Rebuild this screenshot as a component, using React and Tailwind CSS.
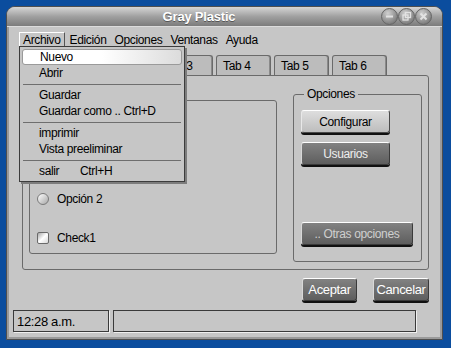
import React from "react";

const raisedLight =
  "rounded-[3px] border border-[#4a4a4a] border-t-white border-l-[#e8e8e8] shadow-[0_2px_0_#111] bg-gradient-to-b from-[#dedede] to-[#bdbdbd] text-black";
const raisedDark =
  "rounded-[3px] border border-[#3a3a3a] border-t-white border-l-[#d8d8d8] shadow-[0_2px_0_#111] bg-gradient-to-b from-[#828282] to-[#5e5e5e]";

function WinButton({ children }) {
  return (
    <svg width="17" height="17" viewBox="0 0 17 17">
      <defs>
        <radialGradient id="wb" cx="40%" cy="30%" r="70%">
          <stop offset="0%" stopColor="#cfcfcf" />
          <stop offset="100%" stopColor="#7a7a7a" />
        </radialGradient>
      </defs>
      <circle cx="8.5" cy="8.5" r="8" fill="url(#wb)" stroke="#666" />
      {children}
    </svg>
  );
}

function MenuItem({ children, active }) {
  return (
    <div
      className={`h-[16px] mx-[2px] pl-[17px] flex items-center leading-none ${
        active
          ? "rounded-[3px] border border-[#9a9a9a] bg-gradient-to-r from-white via-white to-[#dcdcdc] pl-[16px]"
          : ""
      }`}
    >
      {children}
    </div>
  );
}

function Separator() {
  return (
    <div className="h-[6px] flex items-center mx-[3px]">
      <div className="w-full h-px bg-[#6e6e6e]" />
    </div>
  );
}

export default function App() {
  const tabs = ["Tab 2", "Tab 3", "Tab 4", "Tab 5", "Tab 6"];

  return (
    <div className="w-[451px] h-[348px] bg-[#0b4d9e] pt-[6px] pl-[6px] font-['Liberation_Sans',Arial,sans-serif] text-[12px] tracking-[-0.35px] text-black">
      <div className="w-[437px] h-[334px] rounded-t-[9px] border border-[#4e4e4e] bg-[#c6c6c6] flex flex-col overflow-hidden">
        {/* title bar */}
        <div className="h-[20px] shrink-0 flex items-center bg-gradient-to-b from-[#d6d6d6] via-[#a0a0a0] to-[#7c7c7c] border-b border-[#dcdcdc]">
          <div className="flex-1 text-center pl-[10px] text-white font-bold text-[13px] tracking-[-0.2px] leading-none [text-shadow:0_1px_0_#555]">
            Gray Plastic
          </div>
          <div className="flex items-center pr-[10px]">
            <WinButton>
              <path d="M5 8.5 H12" stroke="#e2e2e2" strokeWidth="2" />
            </WinButton>
            <WinButton>
              <rect x="5" y="7" width="5" height="5" fill="none" stroke="#e2e2e2" strokeWidth="1.3" />
              <rect x="7.5" y="4.5" width="5" height="5" fill="none" stroke="#e2e2e2" strokeWidth="1.3" />
            </WinButton>
            <WinButton>
              <path d="M5.5 5.5 L11.5 11.5 M11.5 5.5 L5.5 11.5" stroke="#e2e2e2" strokeWidth="2" />
            </WinButton>
          </div>
        </div>

        {/* body */}
        <div className="relative flex-1 flex flex-col shadow-[inset_2px_0_0_#9a9a9a,inset_-2px_0_0_#9a9a9a,inset_0_-2px_0_#9a9a9a]">
          {/* menu bar */}
          <div className="mt-[5px] ml-[12px] h-[15px] flex items-center gap-[2px] leading-none">
            <span className="h-[15px] px-[3px] flex items-center border border-white border-r-[#555] border-b-[#555]">
              Archivo
            </span>
            <span className="px-[3px]">Edición</span>
            <span className="px-[3px]">Opciones</span>
            <span className="px-[3px]">Ventanas</span>
            <span className="px-[3px]">Ayuda</span>
          </div>

          {/* tabs */}
          <div className="mt-[8px] ml-[15px] w-[407px] h-[20px] flex items-end">
            <div className="h-[21px] w-[75px] -mb-px z-10 rounded-t-[3px] border border-b-0 border-[#6a6a6a] bg-[#c6c6c6]" />
            {tabs.map((t) => (
              <div
                key={t}
                className="ml-[3px] h-[20px] w-[55px] rounded-t-[3px] border border-b-0 border-[#6a6a6a] shadow-[inset_-1px_0_0_#8a8a8a] bg-[#bcbcbc] pl-[6px] flex items-center leading-none"
              >
                {t}
              </div>
            ))}
          </div>

          {/* tab panel */}
          <div className="ml-[15px] w-[407px] h-[195px] rounded-[3px] rounded-tl-none border border-[#6a6a6a] flex items-start">
            <div className="ml-[6px] mt-[24px] w-[248px] h-[154px] rounded-[3px] border border-[#6a6a6a] pl-[7px] flex flex-col">
              <label className="mt-[92px] h-[12px] flex items-center gap-[8px] leading-none">
                <span className="w-[12px] h-[12px] rounded-full border border-[#7a7a7a] bg-gradient-to-br from-white to-[#a8a8a8]" />
                Opción 2
              </label>
              <label className="mt-[27px] h-[12px] flex items-center gap-[8px] leading-none">
                <span className="w-[12px] h-[12px] rounded-[2px] border border-[#6a6a6a] bg-gradient-to-br from-[#a8a8a8] via-white to-[#d8d8d8]" />
                Check1
              </label>
            </div>

            <div className="relative ml-[16px] mt-[18px] w-[129px] h-[168px] rounded-[3px] border border-[#6a6a6a] pl-[7px] flex flex-col">
              <span className="absolute -top-[7px] left-[10px] px-[3px] bg-[#c6c6c6] leading-none">
                Opciones
              </span>
              <button className={`mt-[15px] w-[89px] h-[23px] ${raisedLight}`}>Configurar</button>
              <button className={`mt-[9px] w-[89px] h-[23px] text-[#eeeeee] ${raisedDark}`}>Usuarios</button>
              <button className={`mt-[57px] w-[112px] h-[23px] text-[#cfcfcf] ${raisedDark}`}>
                .. Otras opciones
              </button>
            </div>
          </div>

          {/* dialog buttons */}
          <div className="mt-[8px] mr-[13px] flex justify-end gap-[16px]">
            <button className={`w-[55px] h-[23px] text-white text-[13px] ${raisedDark}`}>Aceptar</button>
            <button className={`w-[56px] h-[23px] text-white text-[13px] ${raisedDark}`}>Cancelar</button>
          </div>

          {/* status bar */}
          <div className="mt-[9px] ml-[6px] flex gap-[4px]">
            <div className="w-[96px] h-[22px] border border-[#3a3a3a] shadow-[1px_1px_0_#efefef] pl-[3px] flex items-center leading-none text-[13px]">
              12:28 a.m.
            </div>
            <div className="w-[303px] h-[22px] border border-[#3a3a3a] shadow-[1px_1px_0_#efefef]" />
          </div>

          {/* Archivo dropdown */}
          <div className="absolute left-[12px] top-[19px] w-[166px] h-[136px] z-20 border border-[#3c3c3c] bg-[#c6c6c6] shadow-[2px_2px_0_#7c7c7c] pt-[2px]">
            <MenuItem active>Nuevo</MenuItem>
            <MenuItem>Abrir</MenuItem>
            <Separator />
            <MenuItem>Guardar</MenuItem>
            <MenuItem>Guardar como .. Ctrl+D</MenuItem>
            <Separator />
            <MenuItem>imprimir</MenuItem>
            <MenuItem>Vista preeliminar</MenuItem>
            <Separator />
            <MenuItem>
              <span className="inline-block w-[41px]">salir</span>Ctrl+H
            </MenuItem>
          </div>
        </div>
      </div>
    </div>
  );
}
